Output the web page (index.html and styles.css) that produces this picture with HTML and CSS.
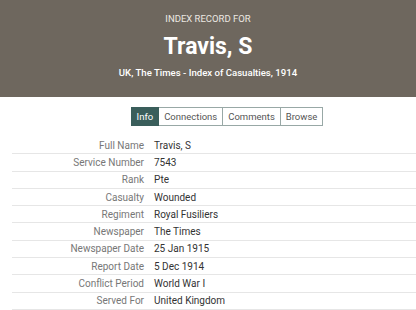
FILE: index.html
```html
<!DOCTYPE html>
<html lang="en">
<head>
    <meta charset="UTF-8">
    <title>Travis, S - Index Record</title>
    <link rel="stylesheet" href="styles.css">
</head>
<body>
<div class="header">
    <div class="kicker">INDEX RECORD FOR</div>
    <h1 class="name">Travis, S</h1>
    <div class="source">UK, The Times - Index of Casualties, 1914</div>
</div>
<div class="tabs">
    <a href="javascript:;" class="tab active">Info</a><a href="javascript:;" class="tab">Connections</a><a href="javascript:;" class="tab">Comments</a><a href="javascript:;" class="tab">Browse</a>
</div>
<div class="record">
    <div class="row"><span class="label">Full Name</span><span class="value">Travis, S</span></div>
    <div class="row"><span class="label">Service Number</span><span class="value">7543</span></div>
    <div class="row"><span class="label">Rank</span><span class="value">Pte</span></div>
    <div class="row"><span class="label">Casualty</span><span class="value">Wounded</span></div>
    <div class="row"><span class="label">Regiment</span><span class="value">Royal Fusiliers</span></div>
    <div class="row"><span class="label">Newspaper</span><span class="value">The Times</span></div>
    <div class="row"><span class="label">Newspaper Date</span><span class="value">25 Jan 1915</span></div>
    <div class="row"><span class="label">Report Date</span><span class="value">5 Dec 1914</span></div>
    <div class="row"><span class="label">Conflict Period</span><span class="value">World War I</span></div>
    <div class="row"><span class="label">Served For</span><span class="value">United Kingdom</span></div>
</div>
</body>
</html>
```
FILE: styles.css
```css
*{margin:0;padding:0;box-sizing:border-box;}
a{text-decoration:none;}
body{
    font-family:"Roboto",sans-serif;
    background:#fff;
    color:#333;
}
.header{
    height:97px;
    background:#6e675e;
    color:#fff;
    text-align:center;
    padding-top:12px;
}
.kicker{
    font-size:9.5px;
    line-height:14px;
    color:#ece8e2;
}
.name{
    font-size:23px;
    line-height:30px;
    font-weight:700;
    margin-top:6px;
}
.source{
    font-size:9.6px;
    line-height:14px;
    font-weight:500;
    margin-top:4px;
}
.tabs{
    display:flex;
    justify-content:center;
    margin-top:10px;
    padding-left:38px;
}
.tab{
    font-size:9.5px;
    line-height:17px;
    padding:0 5px;
    color:#555;
    border:1px solid #98a8a6;
    border-left:none;
}
.tab:first-child{border-left:1px solid #3a5e5b;}
.tab.active{
    background:#3a5e5b;
    color:#fff;
    border-color:#3a5e5b;
}
.record{
    margin-top:11px;
    margin-left:12px;
}
.row{
    display:flex;
    align-items:center;
    height:17.3px;
    border-bottom:1px solid #e6e6e6;
    font-size:10px;
}
.label{
    width:132px;
    text-align:right;
    color:#777;
}
.value{
    margin-left:10px;
    color:#333;
}
```
